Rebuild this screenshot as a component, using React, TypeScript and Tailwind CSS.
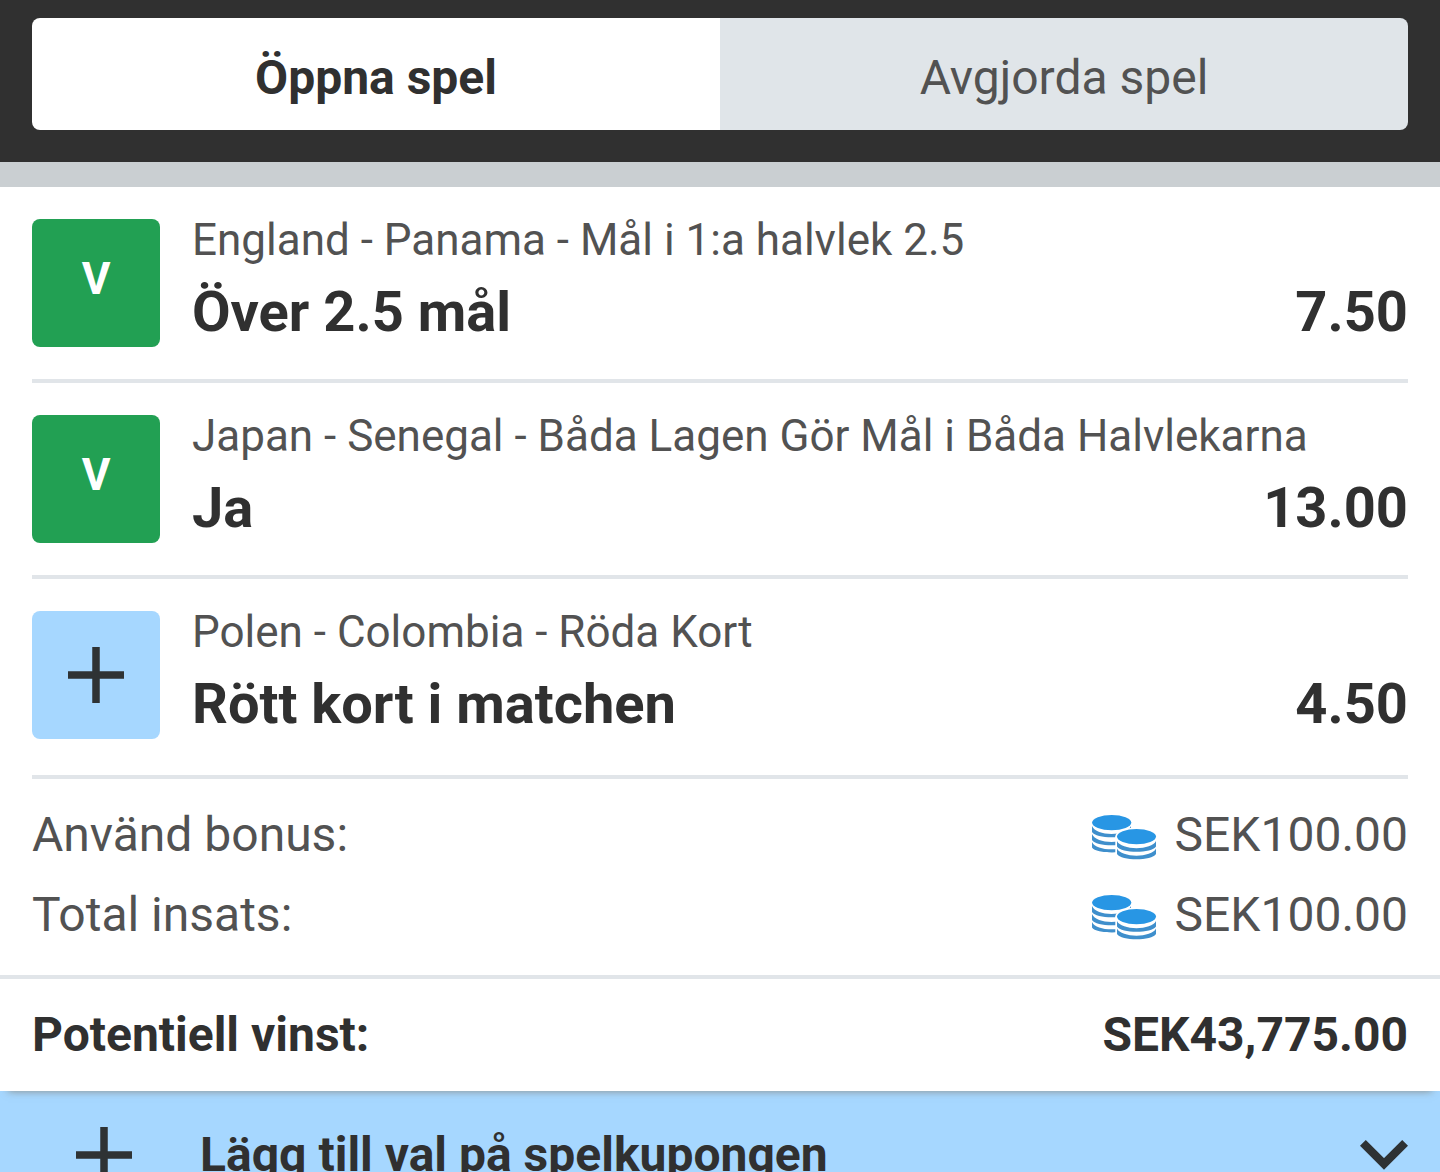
import { useState } from "react"

interface Selection {
  event: string
  pick: string
  odds: string
  status: "won" | "open"
}

const selections: Selection[] = [
  { event: "England - Panama - Mål i 1:a halvlek 2.5", pick: "Över 2.5 mål", odds: "7.50", status: "won" },
  { event: "Japan - Senegal - Båda Lagen Gör Mål i Båda Halvlekarna", pick: "Ja", odds: "13.00", status: "won" },
  { event: "Polen - Colombia - Röda Kort", pick: "Rött kort i matchen", odds: "4.50", status: "open" },
]

const stakes = [
  { label: "Använd bonus:", amount: "SEK100.00" },
  { label: "Total insats:", amount: "SEK100.00" },
]

function PlusIcon() {
  return (
    <svg viewBox="0 0 56 56" className="h-14 w-14 shrink-0" aria-hidden="true">
      <path d="M28 0v56M0 28h56" stroke="#2e3234" strokeWidth="7.5" fill="none" />
    </svg>
  )
}

function ChevronIcon() {
  return (
    <svg viewBox="0 0 48 30" className="h-[30px] w-12 shrink-0" aria-hidden="true">
      <path d="M2.9 2.9 24 24 45.1 2.9" stroke="#2e3234" strokeWidth="8.2" fill="none" />
    </svg>
  )
}

function CoinsIcon() {
  return (
    <svg viewBox="0 -4 66 50" className="h-[50px] w-[66px] shrink-0" aria-hidden="true">
      {/* back stack */}
      <g fill="#3f8fcc">
        <path d="M1 12C5 22.6 36 22.6 40 12v6C36 25 5 25 1 18z" />
        <path d="M1 20C5 30.600 36 30.600 40 20v6C36 33 5 33 1 26z" />
        <path d="M1 28C5 37.800 36 37.800 40 28v6C36 40 5 40 1 33.500z" />
      </g>
      <ellipse cx="20.700" cy="8.600" rx="19.600" ry="7.700" fill="#2896e4" />
      {/* front stack, with a white edge that cuts into the back one */}
      <rect x="24.300" y="22.600" width="41.700" height="20" fill="#fff" />
      <ellipse cx="45.500" cy="22.600" rx="21.200" ry="9.200" fill="#fff" />
      <g fill="#3f8fcc">
        <path d="M26 27C30 36.500 61 36.500 65 27v5.500C61 39.500 30 39.500 26 32.500z" />
        <path d="M26 34.500C30 44 61 44 65 34.500V40C61 47 30 47 26 40z" />
      </g>
      <ellipse cx="45.500" cy="22.600" rx="19.500" ry="7.600" fill="#2896e4" />
    </svg>
  )
}

function SelectionRow({ selection }: { selection: Selection }) {
  return (
    <li className="flex gap-8 border-b-4 border-[#e1e5e9] py-8 last:pb-9">
      {selection.status === "won" ? (
        <div className="flex h-32 w-32 shrink-0 items-center justify-center rounded-lg bg-[#22a053] pb-2 text-[44px] font-bold text-white">
          V
        </div>
      ) : (
        <div className="flex h-32 w-32 shrink-0 items-center justify-center rounded-lg bg-[#a6d7ff]">
          <PlusIcon />
        </div>
      )}
      <div className="min-w-0 flex-1">
        <p className="text-[44px] leading-[42px] text-[#525252]">{selection.event}</p>
        <div className="mt-4 flex justify-between text-[56px] leading-[70px] font-bold">
          <span>{selection.pick}</span>
          <span>{selection.odds}</span>
        </div>
      </div>
    </li>
  )
}

export default function App() {
  const [tab, setTab] = useState<"open" | "settled">("open")

  const active = "flex-1 bg-white pt-2 font-bold text-[#303030]"
  const inactive = "flex-1 bg-[#e0e5e9] pt-2 text-[#525252]"

  return (
    <div className="h-screen overflow-hidden bg-white font-[Roboto,sans-serif] text-[#303030]">
      <header className="bg-[#303030] px-8 pt-[18px] pb-8">
        <div className="flex h-28 overflow-hidden rounded-lg text-[48px] leading-[56px]">
          <button type="button" onClick={() => setTab("open")} className={tab === "open" ? active : inactive}>
            Öppna spel
          </button>
          <button type="button" onClick={() => setTab("settled")} className={tab === "settled" ? active : inactive}>
            Avgjorda spel
          </button>
        </div>
      </header>
      <div className="h-[25px] bg-[#cacfd2]" />

      <main className="relative z-10 bg-white shadow-[0_8px_8px_-8px_rgba(120,90,50,0.6)]">
        <ul className="px-8">
          {selections.map((selection) => (
            <SelectionRow key={selection.event} selection={selection} />
          ))}
        </ul>

        <dl className="px-8 pt-4 pb-5 text-[48px] leading-[80px] text-[#525252]">
          {stakes.map((stake) => (
            <div key={stake.label} className="flex justify-between">
              <dt>{stake.label}</dt>
              <dd className="flex items-center gap-[18px]">
                <CoinsIcon />
                {stake.amount}
              </dd>
            </div>
          ))}
        </dl>

        <div className="flex justify-between border-t-4 border-[#e1e5e9] px-8 text-[48px] leading-[112px] font-bold">
          <span>Potentiell vinst:</span>
          <span>SEK43,775.00</span>
        </div>
      </main>

      <button type="button" className="flex h-32 w-full items-center bg-[#a6d7ff] pr-8 pl-[76px] text-left text-[48px] font-bold">
        <PlusIcon />
        <span className="flex-1 pl-[68px]">Lägg till val på spelkupongen</span>
        <ChevronIcon />
      </button>
    </div>
  )
}
